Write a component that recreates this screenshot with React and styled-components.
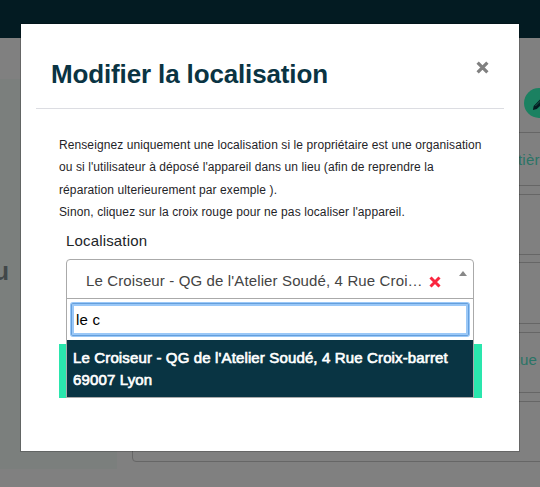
import React from 'react';
import styled, { createGlobalStyle } from 'styled-components';

const GlobalStyle = createGlobalStyle`
  * { box-sizing: border-box; }
  body {
    margin: 0;
    overflow: hidden;
    background: #808080;
    font-family: "Liberation Sans", Arial, Helvetica, sans-serif;
  }
`;

const Page = styled.div`
  position: relative;
  height: 487px;
  overflow: hidden;
  background: #808080;
`;

const Navbar = styled.header`
  height: 38px;
  background: #031b22;
`;

const Columns = styled.div`
  display: grid;
  grid-template-columns: 117px 520px;
  column-gap: 15px;
`;

const Aside = styled.aside`
  height: 390px;
  margin-top: 41px;
  padding-top: 177px;
  background: #7b7f7d;
  color: #414749;
  font-size: 25px;
  line-height: 30px;
  font-weight: 700;
`;

const AsideName = styled.div`
  width: 9px;
  display: flex;
  justify-content: flex-end;
`;

const Cards = styled.main`
  display: flex;
  flex-direction: column;
  padding-top: 50px;
`;

const EditRow = styled.div`
  height: 44px;
  padding-left: 392px;
`;

const EditButton = styled.button`
  display: flex;
  align-items: center;
  justify-content: center;
  width: 30px;
  height: 30px;
  padding: 0;
  border: 0;
  border-radius: 50%;
  background: #1b8161;
`;

const Card = styled.section`
  display: flex;
  flex-shrink: 0;
  height: ${(p) => p.$height}px;
  margin-bottom: ${(p) => p.$gap}px;
  padding-left: ${(p) => p.$indent || 0}px;
  border: 1px solid #666;
  border-radius: 4px;
  color: #2a7466;
  font-size: 15px;
  line-height: 53px;
  letter-spacing: 0.2px;
`;

const Modal = styled.div`
  position: absolute;
  top: 23px;
  left: 20px;
  width: 500px;
  height: 429px;
  padding: 0 15px;
  border: 1px solid rgba(0, 0, 0, 0.2);
  background: #fff;
  background-clip: padding-box;
`;

const ModalHeader = styled.div`
  display: flex;
  justify-content: space-between;
  height: 85px;
  padding: 34px 14px 0 15px;
  border-bottom: 1px solid #dcdde2;
`;

const Title = styled.h2`
  margin: 0;
  color: #0a3443;
  font-size: 26px;
  line-height: 33px;
  font-weight: 700;
  letter-spacing: -0.14px;
  white-space: nowrap;
`;

const CloseButton = styled.button`
  display: flex;
  width: 14px;
  height: 14px;
  margin-top: 3px;
  padding: 0;
  border: 0;
  background: transparent;
`;

const Form = styled.form`
  padding: 25px 22px 0 23px;
`;

const Help = styled.p`
  margin: 0;
  color: #1f2428;
  font-size: 12px;
  line-height: 22.4px;
  white-space: nowrap;
`;

const HelpLine = styled.span`
  display: block;
  letter-spacing: ${(p) => p.$spacing}px;
`;

const Field = styled.div`
  position: relative;
  height: 120px;
  padding: 0 8px 0 7px;
`;

const Label = styled.label`
  display: block;
  height: 35px;
  color: #212529;
  font-size: 15px;
  line-height: 34px;
  letter-spacing: 0.16px;
`;

const SelectBox = styled.div`
  display: flex;
  height: 40px;
  padding: 0 6px 0 19px;
  border: 1px solid #aaa;
  border-radius: 4px 4px 0 0;
  color: #444;
`;

const Selected = styled.span`
  width: 343px;
  font-size: 15px;
  line-height: 42px;
  letter-spacing: 0.13px;
  white-space: nowrap;
`;

const Clear = styled.span`
  display: flex;
  padding-top: 16px;
`;

const Caret = styled.span`
  width: 8px;
  height: 5px;
  margin: 11px 0 0 auto;
  border: solid transparent;
  border-width: 0 4px 5px;
  border-bottom-color: #888;
`;

const Dropdown = styled.div`
  position: absolute;
  z-index: 1;
  top: 74px;
  left: 7px;
  right: 8px;
  border: 1px solid #aaa;
  background: #fff;
`;

const SearchWrap = styled.div`
  padding: 4px;
`;

const Search = styled.input`
  display: block;
  width: 100%;
  height: 33px;
  padding: 0 3px 0 4px;
  border: 1px solid #659fdb;
  border-radius: 2px;
  outline: 0;
  box-shadow: inset 0 0 0 2px #9ac8f8, 0 0 0 1px #9ac8f8;
  color: #000;
  font: 15px "Liberation Sans", Arial, sans-serif;
  letter-spacing: 0.2px;
`;

const Option = styled.div`
  height: 57px;
  padding: 7px 6px 6px;
  background: #093443;
  color: #fff;
  font-size: 15px;
  line-height: 22px;
  letter-spacing: 0.14px;
  -webkit-text-stroke: 0.65px #fff;
  white-space: nowrap;
`;

const OptionLine = styled.span`
  display: block;
`;

const Submit = styled.button`
  display: block;
  width: 100%;
  height: 54px;
  border: 0;
  background: #2ae6ad;
`;

const Cross = ({ size, color }) => (
  <svg width={size} height={size} viewBox="0 0 12 12">
    <path d="M1.5 1.5 10.5 10.5M10.5 1.5 1.5 10.5" stroke={color} strokeWidth="3" />
  </svg>
);

const Pencil = () => (
  <svg width="15" height="15" viewBox="0 0 15 15" fill="#051c22">
    <path d="m10.5 1 3.2 3.2-1.5 1.5L9 2.5zM8.2 3.3l3.2 3.2-6.6 6.6-3.9 1 .8-4.1z" />
    <path d="m8.3 5.1-5 5" stroke="#1b8161" strokeWidth=".7" />
  </svg>
);

export default function App() {
  return (
    <>
      <GlobalStyle />
      <Page>
        <Navbar />
        <Columns>
          <Aside><AsideName>u</AsideName></Aside>
          <Cards>
            <EditRow>
              <EditButton type="button" aria-label="Modifier"><Pencil /></EditButton>
            </EditRow>
            <Card $height={54} $gap={8} $indent={385}>tière</Card>
            <Card $height={61} $gap={7} />
            <Card $height={62} $gap={8} />
            <Card $height={61} $gap={8} $indent={376}>Rue</Card>
            <Card $height={61} $gap={0} />
          </Cards>
        </Columns>
        <Modal role="dialog">
          <ModalHeader>
            <Title>Modifier la localisation</Title>
            <CloseButton type="button" aria-label="Fermer"><Cross size={13} color="#808080" /></CloseButton>
          </ModalHeader>
          <Form>
            <Help>
              <HelpLine $spacing={0.09}>Renseignez uniquement une localisation si le propriétaire est une organisation</HelpLine>
              <HelpLine $spacing={0.09}>ou si l'utilisateur à déposé l'appareil dans un lieu (afin de reprendre la</HelpLine>
              <HelpLine $spacing={0.1}>réparation ulterieurement par exemple ).</HelpLine>
              <HelpLine $spacing={0.11}>Sinon, cliquez sur la croix rouge pour ne pas localiser l'appareil.</HelpLine>
            </Help>
            <Field>
              <Label htmlFor="place">Localisation</Label>
              <SelectBox>
                <Selected>Le Croiseur - QG de l'Atelier Soudé, 4 Rue Croi…</Selected>
                <Clear><Cross size={12} color="#fa263f" /></Clear>
                <Caret />
              </SelectBox>
              <Dropdown>
                <SearchWrap><Search id="place" defaultValue="le c" /></SearchWrap>
                <Option>
                  <OptionLine>Le Croiseur - QG de l'Atelier Soudé, 4 Rue Croix-barret</OptionLine>
                  <OptionLine>69007 Lyon</OptionLine>
                </Option>
              </Dropdown>
            </Field>
            <Submit type="button" aria-label="Valider" />
          </Form>
        </Modal>
      </Page>
    </>
  );
}
